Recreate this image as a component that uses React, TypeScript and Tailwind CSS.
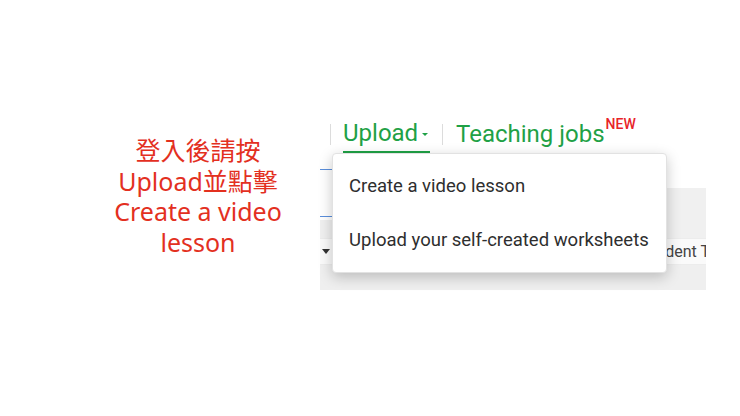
import React from 'react';

const green = 'text-[#1fa146]';

function Separator() {
  return <div className="w-px h-[21px] bg-[#dcdcdc] self-center" />;
}

function UploadMenu() {
  return (
    <div className="absolute left-[12px] top-0 w-[335px] h-[120px] bg-white rounded-[4px] border border-[#e2e2e2] shadow-[0_4px_14px_rgba(0,0,0,0.22)] pt-[6px] text-[18.5px] text-[#2e2e2e]">
      <div className="h-[54px] flex items-center pl-[16px]">Create a video lesson</div>
      <div className="h-[54px] flex items-center pl-[16px]">Upload your self-created worksheets</div>
    </div>
  );
}

export default function App() {
  return (
    <div className="w-[740px] h-[416px] bg-white flex items-start overflow-hidden">
      <div
        className="w-[320px] pl-[76px] pt-[135px] text-center text-[25px] leading-[30.5px] text-[#e3301f]"
        style={{ fontFamily: '"Noto Sans", "Noto Sans CJK TC", sans-serif' }}
      >
        <p>登入後請按</p>
        <p>Upload並點擊</p>
        <p>Create a video</p>
        <p>lesson</p>
      </div>

      <div
        className="w-[386px] pt-[115px]"
        style={{ fontFamily: 'Roboto, "Liberation Sans", sans-serif' }}
      >
        <nav className="h-[38px] flex items-stretch pl-[10px]">
          <Separator />
          <div className="ml-[12px] w-[87px] flex items-center border-b-2 border-[#1fa146]">
            <span className={`text-[24px] leading-[24px] ${green}`}>Upload</span>
            <span className="ml-[4px] mt-[2px] w-0 h-0 border-l-[3px] border-r-[3px] border-t-[3px] border-l-transparent border-r-transparent border-t-[#1fa146]" />
          </div>
          <div className="ml-[12px] flex">
            <Separator />
          </div>
          <div className="ml-[13px] flex items-center">
            <span className={`text-[24px] leading-[24px] ${green}`}>Teaching jobs</span>
            <span className="self-start mt-[1px] ml-[1px] text-[14px] leading-[16px] font-medium text-[#e8242a]">NEW</span>
          </div>
        </nav>

        <div className="relative">
          <div className="h-[35px] bg-white pt-[16px]">
            <div className="w-[12px] h-px bg-[#5b8fdc]" />
          </div>
          <div className="h-[32px] flex">
            <div className="w-[12px] bg-white pt-[28px]">
              <div className="h-px bg-[#5b8fdc]" />
            </div>
            <div className="flex-1 bg-[#f0f0f0]" />
          </div>
          <div className="h-[18px] bg-[#f0f0f0]" />
          <div className="h-[27px] bg-[#fafafa] border-y border-[#ececec] flex items-center justify-between overflow-hidden">
            <span className="ml-[2px] w-0 h-0 border-l-[4px] border-r-[4px] border-t-[5px] border-l-transparent border-r-transparent border-t-[#333]" />
            <span className="text-[16px] text-[#444] whitespace-nowrap mr-[-4px]">Student T</span>
          </div>
          <div className="h-[25px] bg-[#efefef]" />

          <UploadMenu />
        </div>
      </div>
    </div>
  );
}
